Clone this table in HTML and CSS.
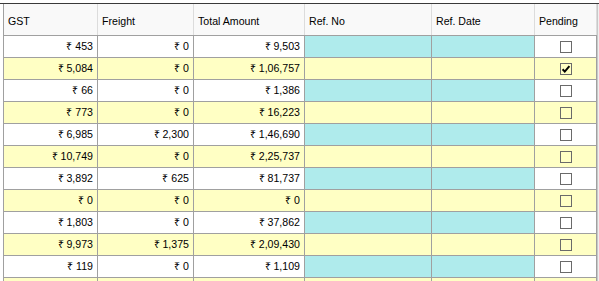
FILE: index.html
```html
<!DOCTYPE html>
<html>
<head>
<meta charset="utf-8">
<link rel="stylesheet" href="styles.css">
</head>
<body>
<div class="frame">
<table class="grid">
<colgroup>
<col class="c-gst"><col class="c-fr"><col class="c-tot"><col class="c-rno"><col class="c-rdt"><col class="c-pen">
</colgroup>
<thead>
<tr><th>GST</th><th>Freight</th><th>Total Amount</th><th>Ref. No</th><th>Ref. Date</th><th>Pending</th></tr>
</thead>
<tbody>
<tr class="w"><td>₹ 453</td><td>₹ 0</td><td>₹ 9,503</td><td class="ref"></td><td class="ref"></td><td class="pen"><span class="cb"></span></td></tr>
<tr class="y"><td>₹ 5,084</td><td>₹ 0</td><td>₹ 1,06,757</td><td class="ref"></td><td class="ref"></td><td class="pen"><span class="cb"><svg viewBox="0 0 12 12" width="12" height="12"><path d="M2.6 6.2 L4.8 8.6 L9.4 3.2" fill="none" stroke="#000" stroke-width="2"/></svg></span></td></tr>
<tr class="w"><td>₹ 66</td><td>₹ 0</td><td>₹ 1,386</td><td class="ref"></td><td class="ref"></td><td class="pen"><span class="cb"></span></td></tr>
<tr class="y"><td>₹ 773</td><td>₹ 0</td><td>₹ 16,223</td><td class="ref"></td><td class="ref"></td><td class="pen"><span class="cb"></span></td></tr>
<tr class="w"><td>₹ 6,985</td><td>₹ 2,300</td><td>₹ 1,46,690</td><td class="ref"></td><td class="ref"></td><td class="pen"><span class="cb"></span></td></tr>
<tr class="y"><td>₹ 10,749</td><td>₹ 0</td><td>₹ 2,25,737</td><td class="ref"></td><td class="ref"></td><td class="pen"><span class="cb"></span></td></tr>
<tr class="w"><td>₹ 3,892</td><td>₹ 625</td><td>₹ 81,737</td><td class="ref"></td><td class="ref"></td><td class="pen"><span class="cb"></span></td></tr>
<tr class="y"><td>₹ 0</td><td>₹ 0</td><td>₹ 0</td><td class="ref"></td><td class="ref"></td><td class="pen"><span class="cb"></span></td></tr>
<tr class="w"><td>₹ 1,803</td><td>₹ 0</td><td>₹ 37,862</td><td class="ref"></td><td class="ref"></td><td class="pen"><span class="cb"></span></td></tr>
<tr class="y"><td>₹ 9,973</td><td>₹ 1,375</td><td>₹ 2,09,430</td><td class="ref"></td><td class="ref"></td><td class="pen"><span class="cb"></span></td></tr>
<tr class="w"><td>₹ 119</td><td>₹ 0</td><td>₹ 1,109</td><td class="ref"></td><td class="ref"></td><td class="pen"><span class="cb"></span></td></tr>
<tr class="y"><td>&nbsp;</td><td></td><td></td><td class="ref"></td><td class="ref"></td><td class="pen"><span class="cb"></span></td></tr>
</tbody>
</table>
<div class="vscroll"></div>
</div>
</body>
</html>
```
FILE: styles.css
```css
html, body {
  margin: 0;
  padding: 0;
  background: #ffffff;
  overflow: hidden;
  height: 281px;
}
.frame {
  margin-top: 3px;
  border-top: 1px solid #3a3a3a;
  padding-left: 3px;
  display: flex;
  align-items: flex-start;
  height: 277px;
  overflow: hidden;
}
.grid {
  border-collapse: collapse;
  table-layout: fixed;
  width: 594px;
  font-family: "Liberation Sans", Arial, sans-serif;
  font-size: 10.6px;
  color: #000;
  border-left: 1px solid #a0a0a0;
  flex: none;
}
.c-gst { width: 94px; }
.c-fr { width: 96px; }
.c-tot { width: 111px; }
.c-rno { width: 127px; }
.c-rdt { width: 103px; }
.c-pen { width: 62px; }
th {
  height: 31px;
  padding: 4px 4px 0 4px;
  text-align: left;
  font-weight: normal;
  background: #f9f9f9;
  border-left: 1px solid #dcdcdc;
  border-right: 1px solid #dcdcdc;
  border-bottom: 1px solid #a0a0a0;
  box-sizing: border-box;
  white-space: nowrap;
}
th:first-child { border-left: 1px solid #a0a0a0; }
td {
  height: 21px;
  padding: 0 4px 0 4px;
  text-align: right;
  border: 1px solid #a0a0a0;
  white-space: nowrap;
  box-sizing: content-box;
}
tr.w td { background: #ffffff; }
tr.y td { background: #ffffc4; }
tr.w td.ref { background: #afebec; }
td.pen { text-align: center; padding: 0; }
.cb {
  display: inline-block;
  width: 10px;
  height: 10px;
  border: 1px solid #6a6a6a;
  vertical-align: middle;
  position: relative;
  top: 0;
}
.cb svg {
  position: absolute;
  left: -1px;
  top: -1px;
}
.vscroll {
  width: 2px;
  height: 277px;
  border-left: 1px solid #c8c8c8;
  background: #efefef;
  flex: none;
}
```
